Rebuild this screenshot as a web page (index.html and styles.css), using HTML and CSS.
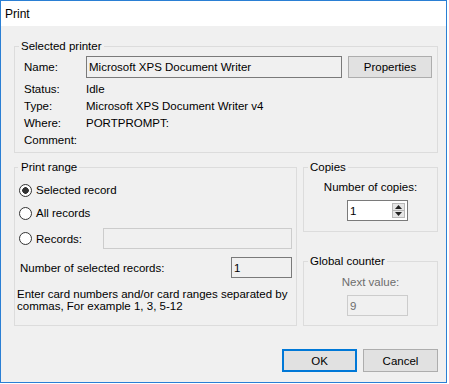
FILE: index.html
```html
<!DOCTYPE html>
<html>
<head>
<meta charset="utf-8">
<link rel="stylesheet" href="styles.css">
</head>
<body>
<div class="window">
  <div class="titlebar">Print</div>
  <div class="body">
    <fieldset class="group printer">
      <legend>Selected printer</legend>
      <div class="printer-grid">
        <span class="lbl">Name:</span>
        <div class="field ro name-field">Microsoft XPS Document Writer</div>
        <button class="btn props">Properties</button>
        <span class="lbl">Status:</span><span class="val">Idle</span>
        <span class="lbl">Type:</span><span class="val">Microsoft XPS Document Writer v4</span>
        <span class="lbl">Where:</span><span class="val">PORTPROMPT:</span>
        <span class="lbl">Comment:</span><span class="val"></span>
      </div>
    </fieldset>
    <div class="row">
      <fieldset class="group range">
        <legend>Print range</legend>
        <div class="opt opt1"><span class="radio on"></span><span>Selected record</span></div>
        <div class="opt opt2"><span class="radio"></span><span>All records</span></div>
        <div class="opt opt3"><span class="radio"></span><span class="rec-lbl">Records:</span><div class="field disabled rec-field"></div></div>
        <div class="count-row"><span>Number of selected records:</span><div class="field ro count-field">1</div></div>
        <p class="hint">Enter card numbers and/or card ranges separated by<br>commas, For example 1, 3, 5-12</p>
      </fieldset>
      <div class="side">
        <fieldset class="group copies">
          <legend>Copies</legend>
          <div class="center-lbl">Number of copies:</div>
          <div class="spin">
            <span class="spin-val">1</span>
            <div class="spin-btns">
              <span class="spin-up"><svg width="7" height="4" viewBox="0 0 7 4"><path d="M0 4 L3.5 0 L7 4 Z" fill="#222"/></svg></span>
              <span class="spin-down"><svg width="7" height="4" viewBox="0 0 7 4"><path d="M0 0 L3.5 4 L7 0 Z" fill="#222"/></svg></span>
            </div>
          </div>
        </fieldset>
        <fieldset class="group counter">
          <legend>Global counter</legend>
          <div class="center-lbl dim">Next value:</div>
          <div class="field disabled next-field">9</div>
        </fieldset>
      </div>
    </div>
    <div class="actions">
      <button class="btn ok">OK</button>
      <button class="btn cancel">Cancel</button>
    </div>
  </div>
</div>
</body>
</html>
```
FILE: styles.css
```css
* { box-sizing: border-box; }
body {
  margin: 0;
  background: #ffffff;
  font-family: "Liberation Sans", Arial, sans-serif;
  font-size: 11.5px;
  color: #000;
}
.window {
  width: 447px;
  height: 383px;
  border: 1px solid #2a7fd4;
  background: #f0f0f0;
  display: flex;
  flex-direction: column;
}
.titlebar {
  height: 25px;
  background: #fff;
  font-size: 12px;
  padding-left: 4px;
  display: flex;
  align-items: center;
}
.body {
  padding: 13px 8px 0 13px;
}
.group {
  margin: 0;
  border: 1px solid #dcdcdc;
  padding: 0 4px;
  min-width: 0;
}
.group > legend {
  padding: 0 2px;
  line-height: 14px;
}
.printer { padding: 3px 4px 4px 4px; }
.printer-grid {
  margin-left: 5px;
  display: grid;
  grid-template-columns: 62px 262px 84px;
  grid-template-rows: 24px repeat(4, 17px);
  align-items: center;
}
.printer-grid .lbl { grid-column: 1; }
.printer-grid .val { grid-column: 2 / span 2; white-space: nowrap; }
.printer-grid > :nth-child(1),
.printer-grid > :nth-child(2),
.printer-grid > :nth-child(3) { align-self: start; }
.printer-grid > :nth-child(1) { line-height: 22px; }
.field {
  height: 21px;
  border: 1px solid #7a7a7a;
  background: #fff;
  padding-left: 2px;
  display: flex;
  align-items: center;
  white-space: nowrap;
  overflow: hidden;
}
.field.ro { background: #f0f0f0; }
.field.disabled { border-color: #cccccc; background: #f0f0f0; color: #6d6d6d; }
.name-field { width: 256px; height: 22px; }
.btn {
  font: inherit;
  color: #000;
  background: #e1e1e1;
  border: 1px solid #adadad;
  padding: 0;
  margin: 0;
  height: 23px;
}
.props { width: 84px; height: 22px; }

.row {
  margin-top: 7px;
  display: flex;
  gap: 6px;
}
.range {
  width: 283px;
  padding: 7px 4px 13px 3px;
  display: flex;
  flex-direction: column;
}
.range > legend { padding: 0 2px 0 3px; }
.opt {
  display: flex;
  align-items: center;
  gap: 4px;
  padding-left: 1px;
  height: 18px;
}
.opt2 { margin-top: 5px; }
.opt3 { margin-top: 6px; height: 21px; }
.rec-lbl { width: 63px; }
.rec-field { flex: 1; }
.radio {
  width: 13px;
  height: 13px;
  border-radius: 50%;
  border: 1px solid #333;
  background: #fff;
  flex: none;
}
.radio.on {
  background: radial-gradient(circle, #333 0 3px, #fff 3.6px);
}
.count-row {
  margin-top: 8px;
  display: flex;
  align-items: center;
  justify-content: space-between;
  padding-left: 2px;
}
.count-field { width: 61px; }
.hint {
  margin: 10px 0 0 -1px;
  line-height: 12px;
  white-space: nowrap;
}

.side {
  width: 135px;
  display: flex;
  flex-direction: column;
}
.copies { padding: 5px 4px 10px 4px; }
.counter { margin-top: 22px; padding: 6px 4px 9px 4px; }
.center-lbl {
  text-align: center;
  line-height: 17px;
}
.dim { color: #6d6d6d; }
.spin {
  margin: 4px 0 0 39px;
  width: 61px;
  height: 21px;
  border: 1px solid #7a7a7a;
  background: #fff;
  display: flex;
  align-items: center;
  padding: 0 2px 0 2px;
}
.spin-val { flex: 1; }
.spin-btns {
  width: 13px;
  height: 15px;
  display: flex;
  flex-direction: column;
  border: 1px solid #b8b8b8;
  background: #e6e6e6;
}
.spin-btns span {
  flex: 1;
  display: flex;
  align-items: center;
  justify-content: center;
}
.spin-up { border-bottom: 1px solid #b8b8b8; }
.next-field { margin: 4px 0 0 39px; width: 61px; }

.actions {
  margin-top: 23px;
  display: flex;
  justify-content: flex-end;
  gap: 6px;
}
.ok { width: 75px; border: 2px solid #0078d7; }
.cancel { width: 75px; }
```
